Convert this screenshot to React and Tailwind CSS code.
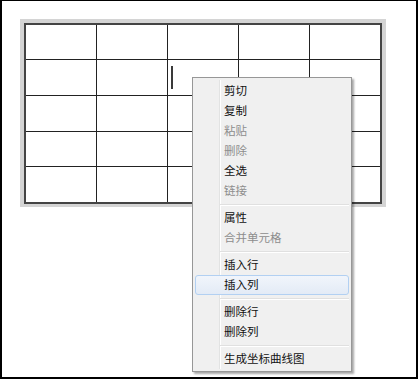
import React from "react";

const rows = [34, 35, 35, 34, 35];
const cols = [0, 1, 2, 3, 4];

const menu = [
  { label: "剪切" },
  { label: "复制" },
  { label: "粘贴", disabled: true },
  { label: "删除", disabled: true },
  { label: "全选" },
  { label: "链接", disabled: true },
  { sep: true },
  { label: "属性" },
  { label: "合并单元格", disabled: true },
  { sep: true },
  { label: "插入行" },
  { label: "插入列", active: true },
  { sep: true },
  { label: "删除行" },
  { label: "删除列" },
  { sep: true },
  { label: "生成坐标曲线图" },
];

function ContextMenu() {
  return (
    <div className="absolute left-[190px] top-[76px] w-[160px] border border-[#979797] bg-[#f0f0f0] pt-[3px] pb-[2px] shadow-[2px_2px_2px_rgba(0,0,0,0.35)]">
      {/* gutter line */}
      <div className="absolute left-[26px] top-[2px] bottom-[2px] w-px bg-[#e2e3e3]" />
      <div className="absolute left-[27px] top-[2px] bottom-[2px] w-px bg-white" />
      {menu.map((item, i) =>
        item.sep ? (
          <div key={i} className="relative pt-[3px] pb-[2px] ml-[27px] mr-[2px]">
            <div className="h-px bg-[#e0e0e0]" />
            <div className="h-px bg-white" />
          </div>
        ) : (
          <div
            key={i}
            className={`relative mx-[2px] h-[20px] flex items-center pl-[29px] rounded-[3px] border ${
              item.active
                ? "border-[#b2d0f2] bg-gradient-to-b from-[#f1f5fb] to-[#e3ebf6]"
                : "border-transparent"
            } ${item.disabled ? "text-[#8d8d8d]" : "text-[#111]"}`}
          >
            <span className="-ml-px">{item.label}</span>
          </div>
        )
      )}
    </div>
  );
}

export default function App() {
  return (
    <div
      className="relative w-[418px] h-[379px] bg-white border-l-2 border-r-2 border-b-2 border-t border-black text-[11.5px] leading-none"
      style={{ fontFamily: '"Microsoft YaHei", "Noto Sans CJK SC", sans-serif' }}
    >
      {/* Table frame */}
      <div className="ml-[18px] mt-[18px] w-fit bg-[#d4d4d4] p-[4px] pb-[3px]">
        <div className="grid grid-cols-[70px_70px_70px_70px_70px] gap-px bg-[#222] border-2 border-[#444]">
          {rows.map((h, r) =>
            cols.map((c) => (
              <div
                key={`${r}-${c}`}
                className={`bg-white ${
                  h === 34 ? "h-[34px]" : "h-[35px]"
                } ${r === 1 && c === 2 ? "pl-[3px] pt-[6px]" : ""}`}
              >
                {r === 1 && c === 2 && <div className="w-[2px] h-[23px] bg-[#3a3a3a]" />}
              </div>
            ))
          )}
        </div>
      </div>

      <ContextMenu />
    </div>
  );
}
